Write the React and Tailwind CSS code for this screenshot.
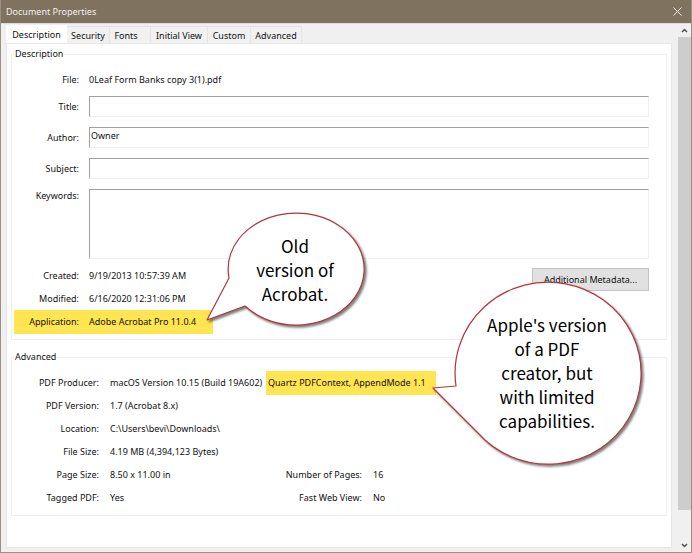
import { useState } from "react";

const tabs = [
  { name: "Description", className: "w-[61px]" },
  { name: "Security", className: "w-[43px]" },
  { name: "Fonts", className: "w-[41px] pr-2" },
  { name: "Initial View", className: "w-[57px]" },
  { name: "Custom", className: "w-[43px]" },
  { name: "Advanced", className: "w-[51px]" },
];

const Tab = ({ name, className, isActive, onClick }) => (
  <button
    type="button"
    role="tab"
    aria-selected={isActive}
    onClick={onClick}
    className={`${className} whitespace-nowrap text-center ${isActive ? "-mb-px h-[19px] bg-white" : "h-[17px] border-t border-r border-[#e4e4e4] bg-[#f1f1f1] pt-[2px]"}`}
  >
    {name}
  </button>
);

const Group = ({ title, children }) => (
  <fieldset className="border border-[#efefef]">
    <legend className="ml-[2px] h-[14px] px-px leading-[14px]">{title}</legend>
    {children}
  </fieldset>
);

const inputStyle = "min-w-0 flex-1 resize-none border border-[#f0f0f0] border-t-[#a0a0a0] border-l-[#a0a0a0] bg-white outline-none";

const TextField = ({ id, label, value }) => (
  <div className="flex h-[21px] items-center gap-[10px]">
    <label htmlFor={id} className="w-[67px] text-right">{label}:</label>
    <input id={id} type="text" defaultValue={value} className={`${inputStyle} h-[21px] px-px pb-1`} />
  </div>
);

const InfoRow = ({ label, children }) => (
  <div className="flex h-[23px] items-center gap-[10px] whitespace-nowrap">
    <span className="w-[67px] text-right">{label}:</span>
    <span>{children}</span>
  </div>
);

const AdvancedRow = ({ label, value, label2, value2, children }) => (
  <div className="flex h-[23px] items-center gap-[11px] whitespace-nowrap">
    <span className="w-[87px] text-right">{label}:</span>
    {children || <span className="w-[141px]">{value}</span>}
    {label2 && <span className="w-[100px] text-right">{label2}:</span>}
    {value2 && <span>{value2}</span>}
  </div>
);

const Arrow = ({ d }) => (
  <svg className="h-[5px] w-[7px]" viewBox="0 0 7 5" fill="none" stroke="#505050" strokeWidth="1.5">
    <path d={d} />
  </svg>
);

const ScrollBar = () => (
  <div className="flex w-[13px] shrink-0 flex-col bg-[#f0f0f0]">
    <button type="button" aria-label="Scroll up" className="flex h-[13px] items-center justify-center">
      <Arrow d="M1 4 3.5 1.5 6 4" />
    </button>
    <div className="flex-1">
      <div className="h-[473px] bg-[#cdcdcd]" />
    </div>
    <button type="button" aria-label="Scroll down" className="flex h-[13px] items-center justify-center">
      <Arrow d="M1 1 3.5 3.5 6 1" />
    </button>
  </div>
);

const Balloon = ({ d, viewBox, className, textClassName, lines }) => (
  <div className={`pointer-events-none absolute ${className}`}>
    <svg viewBox={viewBox} className="absolute inset-0 h-full w-full overflow-visible drop-shadow-[2px_2px_1px_rgba(0,0,0,0.5)]">
      <path d={d} fill="#fff" stroke="#b3353b" strokeWidth="1.2" strokeLinejoin="round" />
    </svg>
    <p className={`relative whitespace-nowrap text-center font-['Noto_Sans_CJK_SC',sans-serif] text-[17px] leading-[24px] text-black ${textClassName}`}>
      {lines.map((line) => (
        <span className="block" key={line}>{line}</span>
      ))}
    </p>
  </div>
);

const App = () => {
  const [activeTab, setActiveTab] = useState("Description");

  return (
    <div className="relative flex min-h-screen flex-col border border-t-0 border-[#9a9080] bg-[#f0f0f0] font-['Noto_Sans','Open_Sans',sans-serif] text-[9px] leading-[14px] text-[#111]">
      <header className="flex h-[23px] items-center justify-between bg-[#7f725f] pr-[9px] pl-[5px] text-[#f3f0ea]">
        <h1>Document Properties</h1>
        <button type="button" aria-label="Close">
          <svg className="h-[9px] w-[9px]" viewBox="0 0 9 9" stroke="#f3f0ea" strokeWidth="1">
            <path d="M.5.5l8 8M8.5.5l-8 8" />
          </svg>
        </button>
      </header>

      <div className="flex flex-1 border-t border-[#dedbd6]">
        <main className="flex min-w-0 flex-1 flex-col pr-[6px] pb-[4px] pl-[5px]">
          <div role="tablist" className="flex h-[19px] items-end">
            {tabs.map((tab) => (
              <Tab key={tab.name} {...tab} isActive={tab.name === activeTab} onClick={() => setActiveTab(tab.name)} />
            ))}
          </div>

          <div className="flex flex-1 flex-col gap-[10px] border border-[#e6e6e6] bg-white px-[4px] pt-[3px]">
            <Group title="Description">
              <div className="flex flex-col gap-[10px] pt-[7px] pr-[17px]">
                <div className="-mb-[5px]">
                  <InfoRow label="File">0Leaf Form Banks copy 3(1).pdf</InfoRow>
                </div>
                <TextField id="title" label="Title" value="" />
                <TextField id="author" label="Author" value="Owner" />
                <TextField id="subject" label="Subject" value="" />
                <div className="flex items-start gap-[10px]">
                  <label htmlFor="keywords" className="w-[67px] text-right">Keywords:</label>
                  <textarea id="keywords" className={`${inputStyle} h-[70px]`} />
                </div>
              </div>
              <div className="flex items-start justify-between pt-[5px] pr-[17px]">
                <div>
                  <InfoRow label="Created">9/19/2013 10:57:39 AM</InfoRow>
                  <InfoRow label="Modified">6/16/2020 12:31:06 PM</InfoRow>
                </div>
                <button type="button" className="mt-1 h-[23px] w-[117px] border border-[#c4c4c4] bg-[#e1e1e1]">
                  Additional Metadata...
                </button>
              </div>
              <div className="mb-[5px] ml-[2px] flex h-[24px] w-[199px] items-center gap-[10px] bg-[#ffe552] whitespace-nowrap">
                <span className="w-[65px] text-right">Application:</span>
                <span>Adobe Acrobat Pro 11.0.4</span>
              </div>
            </Group>

            <Group title="Advanced">
              <div className="pt-[7px] pb-[6px]">
                <AdvancedRow label="PDF Producer">
                  <span className="flex items-center">
                    <span className="w-[156px]">macOS Version 10.15 (Build 19A602)</span>
                    <mark className="w-[170px] bg-[#ffe552] px-[2px] py-[5px] text-inherit">Quartz PDFContext, AppendMode 1.1</mark>
                  </span>
                </AdvancedRow>
                <AdvancedRow label="PDF Version" value="1.7 (Acrobat 8.x)" />
                <AdvancedRow label="Location" value="C:\Users\bevi\Downloads\" />
                <AdvancedRow label="File Size" value="4.19 MB (4,394,123 Bytes)" />
                <AdvancedRow label="Page Size" value="8.50 x 11.00 in" label2="Number of Pages" value2="16" />
                <AdvancedRow label="Tagged PDF" value="Yes" label2="Fast Web View" value2="No" />
              </div>
            </Group>
          </div>
        </main>
        <ScrollBar />
      </div>

      <Balloon
        className="top-[214px] left-[206px] h-[112px] w-[158px]"
        viewBox="207 214 158 112"
        d="M229 278A68 56 0 1 1 245 306L207 320Z"
        textClassName="pt-[20px] pl-[18px]"
        lines={["Old", "version of", "Acrobat."]}
      />
      <Balloon
        className="top-[282px] left-[432px] h-[182px] w-[209px]"
        viewBox="433 282 209 182"
        d="M456 386A93 91 0 1 1 478 433L433 388Z"
        textClassName="pt-[31px] pl-[19px]"
        lines={["Apple's version", "of a PDF", "creator, but", "with limited", "capabilities."]}
      />
    </div>
  );
};

export default App;
